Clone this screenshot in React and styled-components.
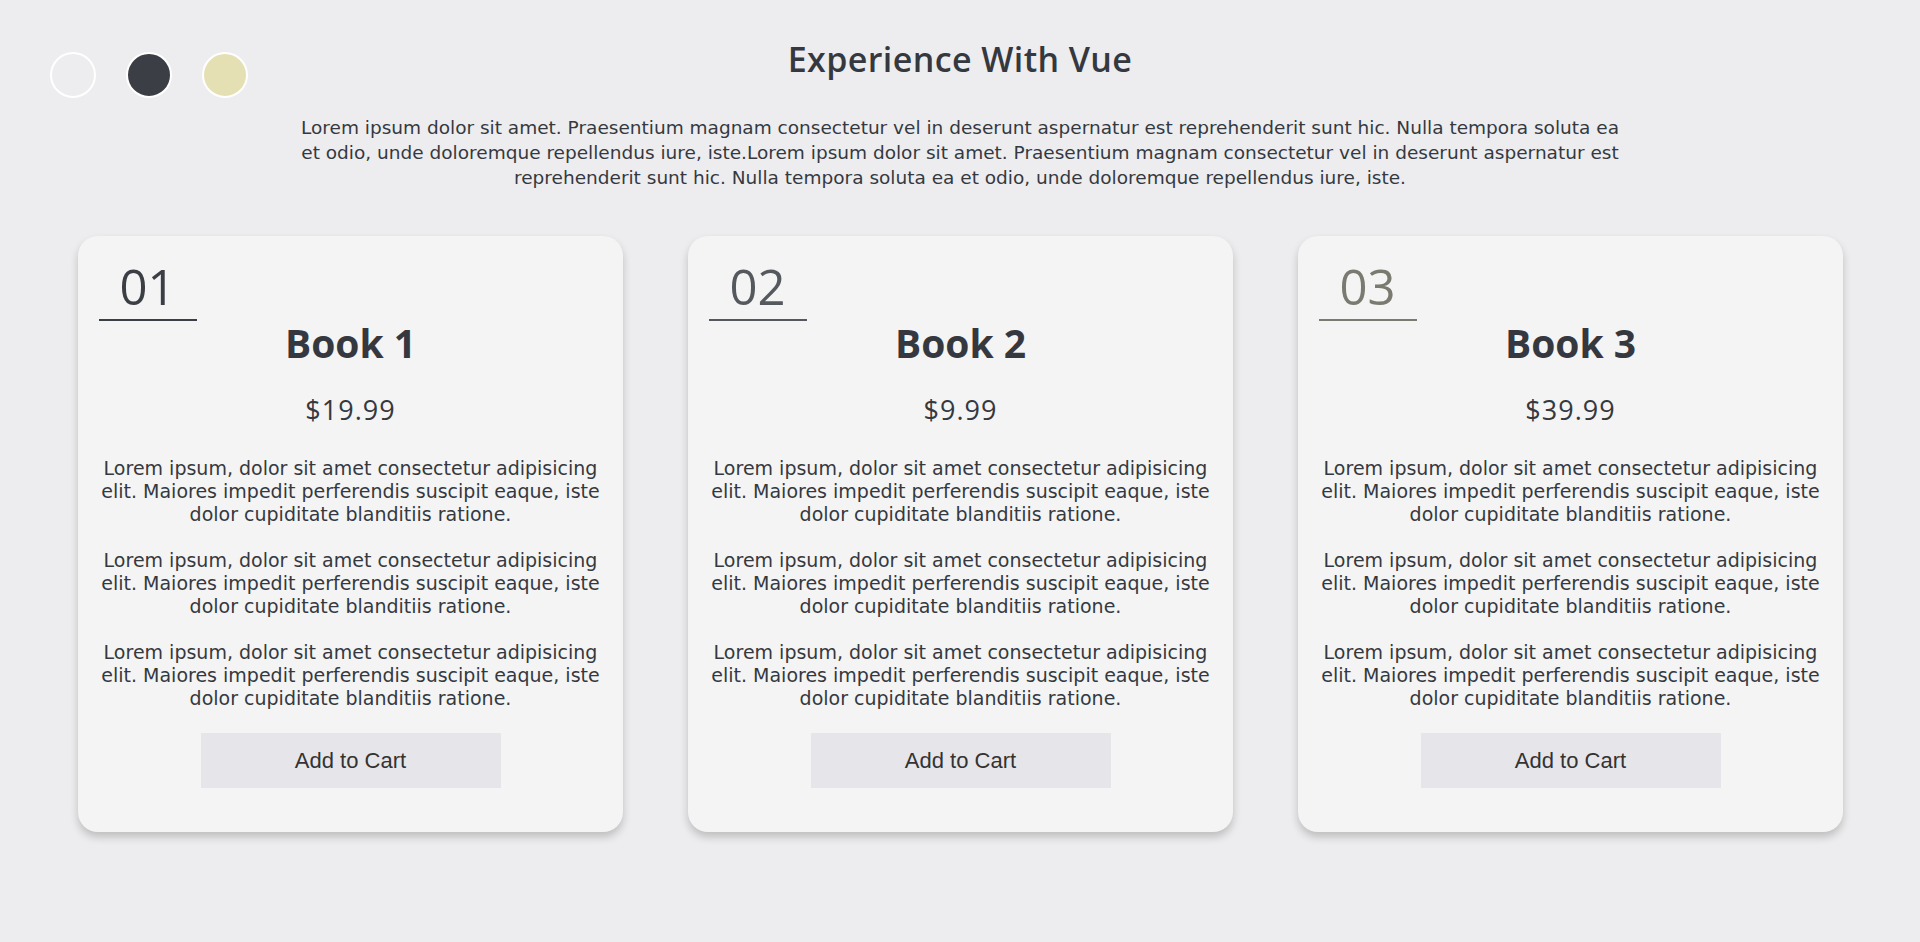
import React from "react";
import styled, { createGlobalStyle } from "styled-components";

const GlobalStyle = createGlobalStyle`
  body {
    margin: 0;
    background: #ededef;
    font-family: "DejaVu Sans", "Noto Sans", sans-serif;
    color: #35393f;
  }
`;

export const Page = styled.div`
  min-height: 942px;
  display: flex;
  flex-direction: column;
  align-items: center;
`;

export const Header = styled.header`
  width: 100%;
  display: grid;
  grid-template-columns: 1fr auto 1fr;
  align-items: start;
`;

export const Dots = styled.div`
  display: flex;
  gap: 30px;
  padding: 52px 0 0 50px;
`;

export const Dot = styled.button`
  width: 46px;
  height: 46px;
  border-radius: 50%;
  border: 2px solid #ffffff;
  background: ${(p) => p.color};
  padding: 0;
  cursor: pointer;
`;

export const Title = styled.h1`
  margin: 39px 0 0;
  font-family: "Open Sans", sans-serif;
  font-size: 34px;
  line-height: 40px;
  letter-spacing: 0.4px;
  font-weight: 600;
  color: #35393f;
`;

export const Intro = styled.p`
  width: 69.5%;
  margin: 17px 0 0;
  font-size: 18.5px;
  line-height: 25px;
  text-align: center;
  color: #35393f;
`;

export const Cards = styled.main`
  display: flex;
  justify-content: center;
  gap: 65px;
  margin-top: 46px;
`;

export const Card = styled.article`
  width: 545px;
  height: 596px;
  box-sizing: border-box;
  padding: 25px 20px 0 21px;
  display: flex;
  flex-direction: column;
  align-items: center;
  background: #f4f4f4;
  border-radius: 20px;
  box-shadow: 0 5px 9px rgba(0, 0, 0, 0.2);
`;

export const Number = styled.div`
  align-self: flex-start;
  padding: 0 21px 8px;
  font-family: "Open Sans", sans-serif;
  font-size: 49px;
  line-height: 50px;
  font-weight: 400;
  color: ${(p) => p.tone};
  border-bottom: 2px solid ${(p) => p.tone};
`;

export const BookTitle = styled.h2`
  margin: 0;
  font-family: "Open Sans", sans-serif;
  font-size: 39px;
  line-height: 44px;
  font-weight: 700;
  color: #35393f;
`;

export const Price = styled.div`
  margin-top: 28px;
  font-family: "Open Sans", sans-serif;
  font-size: 27px;
  line-height: 33px;
  letter-spacing: 1px;
  color: #35393f;
`;

export const Text = styled.p`
  margin: ${(p) => (p.first ? "31px" : "23px")} 0 0;
  font-size: 19px;
  line-height: 23px;
  text-align: center;
  color: #35393f;
`;

export const CartButton = styled.button`
  margin-top: 23px;
  width: 300px;
  height: 55px;
  border: none;
  background: #e6e6ea;
  font-family: "Liberation Sans", Arial, sans-serif;
  font-size: 22px;
  color: #333;
  cursor: pointer;
`;

const books = [
  { num: "01", name: "Book 1", price: "$19.99", tone: "#3b3f45" },
  { num: "02", name: "Book 2", price: "$9.99", tone: "#55595e" },
  { num: "03", name: "Book 3", price: "$39.99", tone: "#7a7a70" },
];

const lorem =
  "Lorem ipsum, dolor sit amet consectetur adipisicing elit. Maiores impedit perferendis suscipit eaque, iste dolor cupiditate blanditiis ratione.";

export default function App() {
  return (
    <Page>
      <GlobalStyle />
      <Header>
        <Dots>
          <Dot color="transparent" />
          <Dot color="#3b3e45" />
          <Dot color="#e4e0b4" />
        </Dots>
        <Title>Experience With Vue</Title>
        <div />
      </Header>
      <Intro>
        Lorem ipsum dolor sit amet. Praesentium magnam consectetur vel in deserunt aspernatur est
        reprehenderit sunt hic. Nulla tempora soluta ea et odio, unde doloremque repellendus iure,
        iste.Lorem ipsum dolor sit amet. Praesentium magnam consectetur vel in deserunt aspernatur
        est reprehenderit sunt hic. Nulla tempora soluta ea et odio, unde doloremque repellendus
        iure, iste.
      </Intro>
      <Cards>
        {books.map((book) => (
          <Card key={book.num}>
            <Number tone={book.tone}>{book.num}</Number>
            <BookTitle>{book.name}</BookTitle>
            <Price>{book.price}</Price>
            <Text first>{lorem}</Text>
            <Text>{lorem}</Text>
            <Text>{lorem}</Text>
            <CartButton>Add to Cart</CartButton>
          </Card>
        ))}
      </Cards>
    </Page>
  );
}
